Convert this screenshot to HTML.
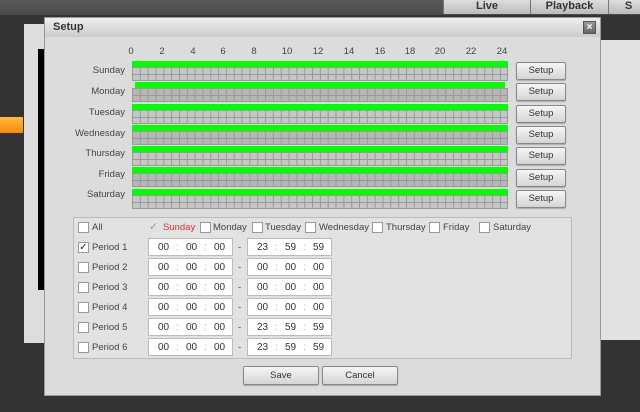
<!DOCTYPE html>
<html><head><style>
*{margin:0;padding:0;box-sizing:border-box}
body{width:640px;height:412px;background:#333;position:relative;overflow:hidden;font-family:"Liberation Sans",Arial,sans-serif;font-size:10px;color:#333}
.a{position:absolute}
.tab{position:absolute;top:0;height:14px;background:linear-gradient(#ddd,#bbb);border-left:1px solid #777;font-weight:bold;font-size:11px;color:#333;text-align:center;line-height:12px}
.lbl{position:absolute;right:515px;font-size:9.5px;color:#444}
.hr{position:absolute;top:46px;font-size:9.5px;color:#444;width:20px;text-align:center}
.green{position:absolute;height:6px;background:#00ff00}
.grid{position:absolute;left:132px;width:376px;height:14px;
background-image:linear-gradient(90deg,#999 1px,transparent 1px),linear-gradient(#999 1px,transparent 1px);
background-size:7.833px 7px;border-right:1px solid #999;border-bottom:1px solid #999}
.btn{position:absolute;background:linear-gradient(#f6f6f6,#d4d4d4);border:1px solid #888;border-radius:2px;text-align:center;font-size:9.5px;color:#333;box-shadow:0 1px 1px #aaa}
.cb{position:absolute;width:11px;height:11px;background:#fff;border:1px solid #999}
.t{position:absolute;font-size:9.5px;color:#444}
.tb{position:absolute;width:85px;height:18px;background:#fff;border:1px solid #bbb;font-size:10px;color:#333}
.tb span{position:absolute;top:3px}
</style></head><body>
<div class="a" style="left:0;top:0;width:640px;height:15px;background:linear-gradient(#5a5a5a,#4a4a4a)"></div>
<div class="tab" style="left:443px;width:87px">Live</div>
<div class="tab" style="left:530px;width:78px">Playback</div>
<div class="tab" style="left:608px;width:40px">S</div>
<div class="a" style="left:24px;top:24px;width:20px;height:319px;background:#ddd"></div>
<div class="a" style="left:38px;top:49px;width:6px;height:241px;background:#000"></div>
<div class="a" style="left:0;top:117px;width:23px;height:16px;background:linear-gradient(#fb4,#f80)"></div>
<div class="a" style="left:600px;top:40px;width:40px;height:300px;background:#e2e2e2"></div>
<!-- dialog -->
<div class="a" style="left:44px;top:17px;width:557px;height:379px;background:#dcdcdc;border:1px solid #999"></div>
<div class="a" style="left:45px;top:18px;width:555px;height:19px;background:linear-gradient(#eee,#ccc)"></div>
<div class="a" style="left:53px;top:21px;font-weight:bold;font-size:11px;color:#333">Setup</div>
<div class="a" style="left:583px;top:21px;width:13px;height:13px;background:linear-gradient(#999,#666);border:1px solid #555;color:#fff;font-size:10px;font-weight:bold;text-align:center;line-height:11px">×</div>

<div class="hr" style="left:121px">0</div><div class="hr" style="left:152px">2</div><div class="hr" style="left:183px">4</div><div class="hr" style="left:213px">6</div><div class="hr" style="left:244px">8</div><div class="hr" style="left:277px">10</div><div class="hr" style="left:308px">12</div><div class="hr" style="left:339px">14</div><div class="hr" style="left:370px">16</div><div class="hr" style="left:400px">18</div><div class="hr" style="left:430px">20</div><div class="hr" style="left:461px">22</div><div class="hr" style="left:492px">24</div>

<div class="grid" style="top:67px;background-color:#c6c6c6"></div><div class="green" style="left:132px;width:376px;top:61px"></div><div class="lbl" style="top:65px">Sunday</div><div class="btn" style="left:516px;top:62px;width:50px;height:18px;line-height:16px">Setup</div>
<div class="grid" style="top:88px;background-color:#b6b6b6"></div><div class="green" style="left:135px;width:370px;top:82px"></div><div class="lbl" style="top:86px">Monday</div><div class="btn" style="left:516px;top:83px;width:50px;height:18px;line-height:16px">Setup</div>
<div class="grid" style="top:110px;background-color:#c6c6c6"></div><div class="green" style="left:132px;width:376px;top:104px"></div><div class="lbl" style="top:107px">Tuesday</div><div class="btn" style="left:516px;top:105px;width:50px;height:18px;line-height:16px">Setup</div>
<div class="grid" style="top:131px;background-color:#b6b6b6"></div><div class="green" style="left:132px;width:376px;top:125px"></div><div class="lbl" style="top:128px">Wednesday</div><div class="btn" style="left:516px;top:126px;width:50px;height:18px;line-height:16px">Setup</div>
<div class="grid" style="top:152px;background-color:#c6c6c6"></div><div class="green" style="left:132px;width:376px;top:146px"></div><div class="lbl" style="top:148px">Thursday</div><div class="btn" style="left:516px;top:147px;width:50px;height:18px;line-height:16px">Setup</div>
<div class="grid" style="top:173px;background-color:#b6b6b6"></div><div class="green" style="left:132px;width:376px;top:167px"></div><div class="lbl" style="top:169px">Friday</div><div class="btn" style="left:516px;top:169px;width:50px;height:18px;line-height:16px">Setup</div>
<div class="grid" style="top:195px;background-color:#c6c6c6"></div><div class="green" style="left:132px;width:376px;top:189px"></div><div class="lbl" style="top:189px">Saturday</div><div class="btn" style="left:516px;top:190px;width:50px;height:18px;line-height:16px">Setup</div>

<!-- lower box -->
<div class="a" style="left:73px;top:217px;width:499px;height:142px;border:1px solid #bbb;background:#e2e2e2"></div>
<div class="cb" style="left:78px;top:222px"></div><div class="t" style="left:92px;top:222px">All</div>
<div class="t" style="left:149px;top:220px;color:#999;font-size:11px">✓</div><div class="t" style="left:163px;top:222px;color:#e03030">Sunday</div>
<div class="cb" style="left:200px;top:222px"></div><div class="t" style="left:213px;top:222px">Monday</div>
<div class="cb" style="left:252px;top:222px"></div><div class="t" style="left:265px;top:222px">Tuesday</div>
<div class="cb" style="left:305px;top:222px"></div><div class="t" style="left:319px;top:222px">Wednesday</div>
<div class="cb" style="left:372px;top:222px"></div><div class="t" style="left:386px;top:222px">Thursday</div>
<div class="cb" style="left:429px;top:222px"></div><div class="t" style="left:443px;top:222px">Friday</div>
<div class="cb" style="left:479px;top:222px"></div><div class="t" style="left:493px;top:222px">Saturday</div>

<div class="cb" style="left:78px;top:242px;font-size:10px;line-height:9px;text-align:center;color:#222">✓</div><div class="t" style="left:92px;top:242px">Period 1</div>
<div class="tb" style="left:148px;top:238px"><span style="left:9px">00</span><span style="left:27px;color:#aaa">:</span><span style="left:37px">00</span><span style="left:55px;color:#aaa">:</span><span style="left:65px">00</span></div><div class="t" style="left:238px;top:242px">-</div>
<div class="tb" style="left:247px;top:238px"><span style="left:9px">23</span><span style="left:27px;color:#aaa">:</span><span style="left:37px">59</span><span style="left:55px;color:#aaa">:</span><span style="left:65px">59</span></div>

<div class="cb" style="left:78px;top:262px"></div><div class="t" style="left:92px;top:262px">Period 2</div>
<div class="tb" style="left:148px;top:258px"><span style="left:9px">00</span><span style="left:27px;color:#aaa">:</span><span style="left:37px">00</span><span style="left:55px;color:#aaa">:</span><span style="left:65px">00</span></div><div class="t" style="left:238px;top:262px">-</div>
<div class="tb" style="left:247px;top:258px"><span style="left:9px">00</span><span style="left:27px;color:#aaa">:</span><span style="left:37px">00</span><span style="left:55px;color:#aaa">:</span><span style="left:65px">00</span></div>

<div class="cb" style="left:78px;top:282px"></div><div class="t" style="left:92px;top:282px">Period 3</div>
<div class="tb" style="left:148px;top:278px"><span style="left:9px">00</span><span style="left:27px;color:#aaa">:</span><span style="left:37px">00</span><span style="left:55px;color:#aaa">:</span><span style="left:65px">00</span></div><div class="t" style="left:238px;top:282px">-</div>
<div class="tb" style="left:247px;top:278px"><span style="left:9px">00</span><span style="left:27px;color:#aaa">:</span><span style="left:37px">00</span><span style="left:55px;color:#aaa">:</span><span style="left:65px">00</span></div>

<div class="cb" style="left:78px;top:302px"></div><div class="t" style="left:92px;top:302px">Period 4</div>
<div class="tb" style="left:148px;top:298px"><span style="left:9px">00</span><span style="left:27px;color:#aaa">:</span><span style="left:37px">00</span><span style="left:55px;color:#aaa">:</span><span style="left:65px">00</span></div><div class="t" style="left:238px;top:302px">-</div>
<div class="tb" style="left:247px;top:298px"><span style="left:9px">00</span><span style="left:27px;color:#aaa">:</span><span style="left:37px">00</span><span style="left:55px;color:#aaa">:</span><span style="left:65px">00</span></div>

<div class="cb" style="left:78px;top:322px"></div><div class="t" style="left:92px;top:322px">Period 5</div>
<div class="tb" style="left:148px;top:318px"><span style="left:9px">00</span><span style="left:27px;color:#aaa">:</span><span style="left:37px">00</span><span style="left:55px;color:#aaa">:</span><span style="left:65px">00</span></div><div class="t" style="left:238px;top:322px">-</div>
<div class="tb" style="left:247px;top:318px"><span style="left:9px">23</span><span style="left:27px;color:#aaa">:</span><span style="left:37px">59</span><span style="left:55px;color:#aaa">:</span><span style="left:65px">59</span></div>

<div class="cb" style="left:78px;top:342px"></div><div class="t" style="left:92px;top:342px">Period 6</div>
<div class="tb" style="left:148px;top:338px"><span style="left:9px">00</span><span style="left:27px;color:#aaa">:</span><span style="left:37px">00</span><span style="left:55px;color:#aaa">:</span><span style="left:65px">00</span></div><div class="t" style="left:238px;top:342px">-</div>
<div class="tb" style="left:247px;top:338px"><span style="left:9px">23</span><span style="left:27px;color:#aaa">:</span><span style="left:37px">59</span><span style="left:55px;color:#aaa">:</span><span style="left:65px">59</span></div>

<div class="btn" style="left:243px;top:366px;width:76px;height:19px;line-height:17px">Save</div>
<div class="btn" style="left:322px;top:366px;width:76px;height:19px;line-height:17px">Cancel</div>
</body></html>
